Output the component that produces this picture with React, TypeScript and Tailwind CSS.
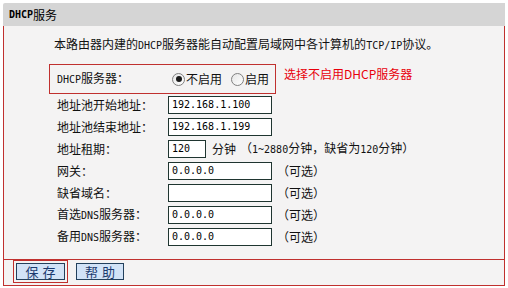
import type { JSX, ReactNode } from "react";

// Latin runs are drawn in a narrow mono face, like the bitmap font of the original page.
function En(props: { children: ReactNode; className?: string }): JSX.Element {
  return <span className={`font-['DejaVu_Sans_Mono',monospace] text-[10px] ${props.className ?? ""}`}>{props.children}</span>;
}

function Radio(props: { checked?: boolean }): JSX.Element {
  return (
    <span className="flex h-[13px] w-[13px] items-center justify-center rounded-full border border-[#808080] bg-gradient-to-br from-[#e6e6e6] to-white">
      {props.checked && <span className="h-[6px] w-[6px] rounded-full bg-[#1a1a1a]" />}
    </span>
  );
}

function Field(props: { value?: string; width?: string }): JSX.Element {
  return (
    <div className={`flex h-[18px] items-center border border-[#1f3530] bg-white pl-[3px] ${props.width ?? "w-[104px]"}`}>
      <En className="text-black">{props.value}</En>
    </div>
  );
}

const Optional = () => <span className="ml-[5px]">（可选）</span>;

type Row = { label: ReactNode; value?: string; optional?: boolean };

const ROWS: Row[] = [
  { label: "地址池开始地址：", value: "192.168.1.100" },
  { label: "地址池结束地址：", value: "192.168.1.199" },
];

const TAIL_ROWS: Row[] = [
  { label: "网关：", value: "0.0.0.0", optional: true },
  { label: "缺省域名：", value: "", optional: true },
  { label: <>首选<En>DNS</En>服务器：</>, value: "0.0.0.0", optional: true },
  { label: <>备用<En>DNS</En>服务器：</>, value: "0.0.0.0", optional: true },
];

function FormRow({ row }: { row: Row }): JSX.Element {
  return (
    <div className="flex h-[22px] items-center">
      <span className="w-[111px]">{row.label}</span>
      <Field value={row.value} />
      {row.optional && <Optional />}
    </div>
  );
}

export default function App(): JSX.Element {
  return (
    <div className="h-[288px] w-[508px] bg-white px-[3px] pt-[3px] font-['Noto_Sans_CJK_SC',sans-serif] text-[12px] leading-[18px] text-[#111]">
      <div className="flex h-[23px] w-[502px] items-center rounded-tl-[2px] bg-[#d5d5d5] pl-[6px] text-black">
        <En className="font-bold">DHCP</En>服务
      </div>

      <div className="w-[502px] border-x border-b border-[#c0302e] bg-[#f4f3f3] pb-[11px] pt-[9px]">
        <p className="pl-[50px]">
          本路由器内建的<En>DHCP</En>服务器能自动配置局域网中各计算机的<En>TCP/IP</En>协议。
        </p>

        <div className="mt-[9px] flex items-start">
          <div className="ml-[45px] flex h-[30px] w-[227px] items-center border border-[#c0302e] pl-[7px]">
            <span className="w-[115px]">
              <En>DHCP</En>服务器：
            </span>
            <Radio checked />
            <span className="ml-[1px]">不启用</span>
            <span className="ml-[9px]">
              <Radio />
            </span>
            <span className="ml-[1px]">启用</span>
          </div>
          <span className="ml-[8px] mt-[1px] text-[#e8000b]">选择不启用DHCP服务器</span>
        </div>

        <div className="pl-[53px]">
          {ROWS.map((row, i) => (
            <FormRow key={i} row={row} />
          ))}
          <div className="flex h-[22px] items-center">
            <span className="w-[111px]">地址租期：</span>
            <Field value="120" width="w-[38px]" />
            <span className="ml-[6px]">分钟</span>
            <span className="ml-[4px]">
              （<En>1~2880</En>分钟，缺省为<En>120</En>分钟）
            </span>
          </div>
          {TAIL_ROWS.map((row, i) => (
            <FormRow key={i} row={row} />
          ))}
        </div>
      </div>

      <div className="flex h-[26px] w-[502px] items-start border-x border-b border-[#c0302e] bg-[#f4f3f3] pl-[9px]">
        <div className="border border-[#c0302e] px-[2px] pb-[2px] pt-[2px]">
          <button className="flex h-[17px] w-[49px] items-center justify-center border border-[#23405c] bg-[#d2e3f7] pl-[4px] text-[13px] leading-[17px] tracking-[4px] text-[#1c3a6e]">
            保存
          </button>
        </div>
        <button className="ml-[8px] mt-[3px] flex h-[17px] w-[48px] items-center justify-center border border-[#23405c] bg-[#d2e3f7] pl-[4px] text-[13px] leading-[17px] tracking-[4px] text-[#1c3a6e]">
          帮助
        </button>
      </div>
    </div>
  );
}
